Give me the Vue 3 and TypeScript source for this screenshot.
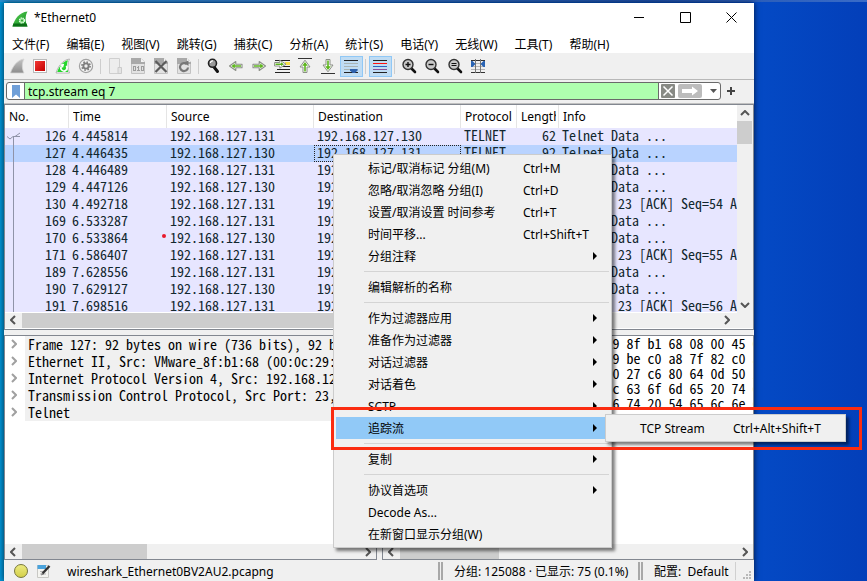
<script setup lang="ts">
import { ref } from 'vue'

interface Packet {
  no: number
  time: string
  src: string
  dst: string
  proto: string
  len: number
  info: string
}

interface MenuItem {
  label?: string
  keys?: string
  sub?: boolean
  active?: boolean
}

interface Tool {
  icon: string
  title: string
  on?: boolean
}

const filter = ref('tcp.stream eq 7')

const menus: string[] = [
  '文件(F)', '编辑(E)', '视图(V)', '跳转(G)', '捕获(C)', '分析(A)',
  '统计(S)', '电话(Y)', '无线(W)', '工具(T)', '帮助(H)',
]

const toolGroups: Tool[][] = [
  [
    { icon: 'fin-gray', title: 'Start' },
    { icon: 'stop', title: 'Stop' },
    { icon: 'restart', title: 'Restart' },
    { icon: 'options', title: 'Options' },
  ],
  [
    { icon: 'open', title: 'Open' },
    { icon: 'save', title: 'Save' },
    { icon: 'close-file', title: 'Close file' },
    { icon: 'reload', title: 'Reload' },
  ],
  [
    { icon: 'find', title: 'Find' },
    { icon: 'back', title: 'Back' },
    { icon: 'forward', title: 'Forward' },
    { icon: 'goto', title: 'Go to packet' },
    { icon: 'first', title: 'First packet' },
    { icon: 'last', title: 'Last packet' },
    { icon: 'autoscroll', title: 'Auto scroll', on: true },
  ],
  [{ icon: 'colorize', title: 'Colorize', on: true }],
  [
    { icon: 'zoom-in', title: 'Zoom in' },
    { icon: 'zoom-out', title: 'Zoom out' },
    { icon: 'zoom-reset', title: 'Normal size' },
    { icon: 'columns', title: 'Resize columns' },
  ],
]

const columns: string[] = ['No.', 'Time', 'Source', 'Destination', 'Protocol', 'Length', 'Info']

const A = '192.168.127.131'
const B = '192.168.127.130'
const data = 'Telnet Data ...'

const telnet = (no: number, time: string, src: string, len: number): Packet => ({
  no, time, src, dst: src === A ? B : A, proto: 'TELNET', len, info: data,
})
const ack = (no: number, time: string, seq: number): Packet => ({
  no, time, src: A, dst: B, proto: 'TCP', len: 54,
  info: `50820 > 23 [ACK] Seq=${seq} Ack=96`,
})

const packets: Packet[] = [
  telnet(126, '4.445814', A, 62),
  telnet(127, '4.446435', B, 92),
  telnet(128, '4.446489', A, 57),
  telnet(129, '4.447126', B, 60),
  ack(130, '4.492718', 54),
  telnet(169, '6.533287', A, 55),
  telnet(170, '6.533864', B, 60),
  ack(171, '6.586407', 55),
  telnet(189, '7.628556', A, 55),
  telnet(190, '7.629127', B, 60),
  ack(191, '7.698516', 56),
]
const selected = ref(127)

const details: string[] = [
  'Frame 127: 92 bytes on wire (736 bits), 92 bytes captured',
  'Ethernet II, Src: VMware_8f:b1:68 (00:0c:29:8f:b1:68)',
  'Internet Protocol Version 4, Src: 192.168.127.130',
  'Transmission Control Protocol, Src Port: 23, Dst Port: 50820',
  'Telnet',
]

const hex: string = [
  '0000  00 0c 29 3e 5d 1a 00 0c  29 8f b1 68 08 00 45 00',
  '0010  00 4e 5a 3c 40 00 40 06  09 be c0 a8 7f 82 c0 a8',
  '0020  7f 83 00 17 c6 84 3b a0  00 27 c6 80 64 0d 50 18',
  '0030  00 e5 7a 1c 00 00 57 65  6c 63 6f 6d 65 20 74 6f',
  '0040  20 4d 69 63 72 6f 73 6f  66 74 20 54 65 6c 6e 65',
].join('\n')

const contextMenu: MenuItem[] = [
  { label: '标记/取消标记 分组(M)', keys: 'Ctrl+M' },
  { label: '忽略/取消忽略 分组(I)', keys: 'Ctrl+D' },
  { label: '设置/取消设置 时间参考', keys: 'Ctrl+T' },
  { label: '时间平移...', keys: 'Ctrl+Shift+T' },
  { label: '分组注释', sub: true },
  {},
  { label: '编辑解析的名称' },
  {},
  { label: '作为过滤器应用', sub: true },
  { label: '准备作为过滤器', sub: true },
  { label: '对话过滤器', sub: true },
  { label: '对话着色', sub: true },
  { label: 'SCTP', sub: true },
  { label: '追踪流', sub: true, active: true },
  {},
  { label: '复制', sub: true },
  {},
  { label: '协议首选项', sub: true },
  { label: 'Decode As...' },
  { label: '在新窗口显示分组(W)' },
]
</script>

<template>
  <div class="desktop">
    <svg class="sprite" aria-hidden="true">
      <defs>
        <linearGradient id="g-fin" x1="0" y1="0" x2="1" y2="1">
          <stop offset="0" stop-color="#5fd35a" />
          <stop offset="1" stop-color="#0b8a1a" />
        </linearGradient>
        <linearGradient id="g-gray" x1="0" y1="0" x2="0" y2="1">
          <stop offset="0" stop-color="#c4c4c4" />
          <stop offset="1" stop-color="#8c8c8c" />
        </linearGradient>
        <linearGradient id="g-red" x1="0" y1="0" x2="1" y2="1">
          <stop offset="0" stop-color="#f23a36" />
          <stop offset="1" stop-color="#c40000" />
        </linearGradient>
        <symbol id="fin" viewBox="0 0 16 16">
          <path d="M.5 15.5C2.500 8 7 1.500 15.500.5C13 5 13 10.500 15.500 15.500Z" fill="url(#g-fin)" />
          <path d="M.5 15.500L1.500 12.500H14.500L15.500 15.500Z" fill="#0c6f17" />
          <circle cx="10" cy="9.500" r="2.600" fill="#9be79a" stroke="#e7ffe7" stroke-width="1.200" stroke-dasharray="1.300 .8" />
          <circle cx="10" cy="9.500" r="1" fill="#2c9e33" />
        </symbol>
        <symbol id="fin-gray" viewBox="0 0 16 16">
          <path d="M1.500 15C3.500 8.500 8 2 15 1C12.800 5 12.800 10.500 15 15Z" fill="url(#g-gray)" stroke="#d6d6d6" stroke-width=".8" />
        </symbol>
        <symbol id="stop" viewBox="0 0 16 16">
          <rect x="1.500" y="1.500" width="13" height="13" fill="#fff" stroke="#b9b9b9" />
          <rect x="3" y="3" width="10" height="10" fill="url(#g-red)" />
        </symbol>
        <symbol id="restart" viewBox="0 0 16 16">
          <path d="M1 15C3 8.500 7.500 2 14.500 1C12.500 5 12.500 10.500 14.500 15Z" fill="#fff" stroke="#a4a4a4" stroke-width=".8" />
          <path d="M2.200 14C4 8.500 8 3.500 13 2.300C11.500 6 11.500 10 13.200 14Z" fill="#24d62c" />
          <path d="M6.500 8.200A3 3 0 1 0 11.200 8" fill="none" stroke="#fff" stroke-width="1.600" />
          <path d="M5 6.500L9.200 5.800L8 10Z" fill="#fff" />
        </symbol>
        <symbol id="options" viewBox="0 0 16 16">
          <circle cx="8" cy="8" r="6.600" fill="#f4f4f4" stroke="#a2a2a2" stroke-width="1.200" />
          <circle cx="8" cy="8" r="3.600" fill="#7d7d7d" />
          <circle cx="8" cy="8" r="4.100" fill="none" stroke="#7d7d7d" stroke-width="1.600" stroke-dasharray="1.600 1.620" />
          <circle cx="8" cy="8" r="1.700" fill="#eee" />
        </symbol>
        <symbol id="open" viewBox="0 0 16 16">
          <path d="M2.500.5H12.500V15.500H2.500Z" fill="#ededed" stroke="#cfcfcf" />
          <path d="M11 9.500H14.500V15.500H11Z" fill="#e4e4e4" stroke="#cacaca" />
        </symbol>
        <symbol id="page" viewBox="0 0 16 16">
          <path d="M1.500.5H11L14.500 4V15.500H1.500Z" fill="#e2e2e2" stroke="#c2c2c2" />
          <path d="M1 0H11V4H15V6H1Z" fill="#a9a9a9" />
          <path d="M11 .5L14.500 4H11Z" fill="#f4f4f4" />
        </symbol>
        <symbol id="save" viewBox="0 0 16 16">
          <use href="#page" width="16" height="16" />
          <g fill="none" stroke="#9c9c9c">
            <rect x="3.500" y="8.500" width="2" height="4" />
            <path d="M8.500 8V13M7 9.500H8M7 12.500H10" />
            <rect x="11.500" y="8.500" width="2" height="4" />
          </g>
        </symbol>
        <symbol id="close-file" viewBox="0 0 16 16">
          <use href="#page" width="16" height="16" />
          <path d="M2.500 3L13.500 14M13.500 3L2.500 14" stroke="#5c5c5c" stroke-width="2.200" fill="none" />
        </symbol>
        <symbol id="reload" viewBox="0 0 16 16">
          <use href="#page" width="16" height="16" />
          <path d="M10.800 6.200A4 4 0 1 0 12 9.500" stroke="#777" stroke-width="2.200" fill="none" />
          <path d="M8 4.500L12.500 2.500V8Z" fill="#777" />
        </symbol>
        <symbol id="find" viewBox="0 0 16 16">
          <path d="M9 9L12.500 13.500" stroke="#111" stroke-width="3" stroke-linecap="round" />
          <circle cx="7.500" cy="5.300" r="4" fill="#9a9a9a" stroke="#222" stroke-width="1.600" />
          <path d="M5.300 5A2.400 2.400 0 0 1 8 3" stroke="#fff" stroke-width="1.200" fill="none" />
        </symbol>
        <symbol id="forward" viewBox="0 0 16 16">
          <path d="M2 6.200H8.200V3.500L14.500 8L8.200 12.500V9.800H2Z" fill="#fff" stroke="#8b8f86" stroke-width="1.100" stroke-linejoin="round" />
          <path d="M3 7.200H9.200V5.600L12.600 8L9.200 10.400V8.800H3Z" fill="#5cb51c" />
        </symbol>
        <symbol id="back" viewBox="0 0 16 16">
          <path d="M14 6.200H7.800V3.500L1.500 8L7.800 12.500V9.800H14Z" fill="#fff" stroke="#8b8f86" stroke-width="1.100" stroke-linejoin="round" />
          <path d="M13 7.200H6.800V5.600L3.400 8L6.800 10.400V8.800H13Z" fill="#5cb51c" />
        </symbol>
        <symbol id="goto" viewBox="0 0 16 16">
          <path d="M1 2.500H16M3 11.500H16M1 14.500H16M9 8.500H16" stroke="#222" />
          <rect x="11" y="4" width="5" height="3" fill="#f7e04a" />
          <path d="M.6 4.500H5.800V2.200L12 6.200L5.800 10.200V8H.6Z" fill="#fff" stroke="#8b8f86" />
          <path d="M1.500 5.600H7V4.300L10 6.200L7 8.100V6.900H1.500Z" fill="#5cb51c" />
        </symbol>
        <symbol id="first" viewBox="0 0 16 16">
          <path d="M1 .5H15" stroke="#333" />
          <path d="M6 14.500V9H3L8 2.200L13 9H10V14.500Z" fill="#fff" stroke="#8b8f86" stroke-linejoin="round" />
          <path d="M7.200 13.500V7.800H5.200L8 4L10.800 7.800H8.800V13.500Z" fill="#5cb51c" />
        </symbol>
        <symbol id="last" viewBox="0 0 16 16">
          <path d="M1 15.500H15" stroke="#333" />
          <path d="M6 1.500V7H3L8 13.800L13 7H10V1.500Z" fill="#fff" stroke="#8b8f86" stroke-linejoin="round" />
          <path d="M7.200 2.500V8.200H5.200L8 12L10.800 8.200H8.800V2.500Z" fill="#5cb51c" />
        </symbol>
        <symbol id="autoscroll" viewBox="0 0 16 16">
          <path d="M1 2.500H15M1 14.500H15" stroke="#222" />
          <path d="M1 5.500H15M1 8.500H15M1 11.500H15" stroke="#a9b4b4" />
          <path d="M7 11H14.500V12.500L12 15H9.500L7 12.500Z" fill="#2e62ad" />
        </symbol>
        <symbol id="colorize" viewBox="0 0 16 16">
          <rect x="1" y="2" width="14" height="1" fill="#222" />
          <rect x="1" y="5" width="14" height="1" fill="#ff1010" />
          <rect x="1" y="8" width="14" height="1" fill="#2c62c0" />
          <rect x="1" y="11" width="14" height="1" fill="#8a4e9a" />
          <rect x="1" y="14" width="14" height="1" fill="#222" />
        </symbol>
        <symbol id="lens" viewBox="0 0 16 16">
          <path d="M10.500 10.500L14 14" stroke="#111" stroke-width="2.600" stroke-linecap="round" />
          <circle cx="7" cy="6.500" r="5" fill="#c9c9c9" stroke="#333" stroke-width="1.400" />
        </symbol>
        <symbol id="zoom-in" viewBox="0 0 16 16">
          <use href="#lens" width="16" height="16" />
          <path d="M4.500 6.500H9.500M7 4V9" stroke="#111" stroke-width="1.400" />
        </symbol>
        <symbol id="zoom-out" viewBox="0 0 16 16">
          <use href="#lens" width="16" height="16" />
          <path d="M4.500 6.500H9.500" stroke="#111" stroke-width="1.400" />
        </symbol>
        <symbol id="zoom-reset" viewBox="0 0 16 16">
          <use href="#lens" width="16" height="16" />
          <path d="M4.500 5.500H9.500M4.500 7.500H9.500" stroke="#111" />
        </symbol>
        <symbol id="columns" viewBox="0 0 16 16">
          <path d="M1 2.500H15M1 14.500H15" stroke="#333" />
          <path d="M1 5.500H15M1 8.500H15M1 11.500H15" stroke="#b5b5b5" />
          <path d="M5.500 1V15M10.500 1V15" stroke="#777" />
          <path d="M1 3H2.500L5.500 6L2.500 9H1ZM15 3H13.500L10.500 6L13.500 9H15Z" fill="#2a64b4" />
        </symbol>
      </defs>
    </svg>

    <main class="window">
      <header class="title-bar">
        <svg class="icon"><use href="#fin" /></svg>
        <h1>*Ethernet0</h1>
        <button aria-label="Minimize"><svg class="ctl" viewBox="0 0 11 11"><path d="M0 5.500H10" /></svg></button>
        <button aria-label="Maximize"><svg class="ctl" viewBox="0 0 11 11"><path d="M.5.5H10.500V10.500H.5Z" /></svg></button>
        <button aria-label="Close"><svg class="ctl" viewBox="0 0 11 11"><path d="M.5.5L10.500 10.500M10.500.5L.5 10.500" /></svg></button>
      </header>

      <nav class="menu-bar">
        <button v-for="m in menus" :key="m">{{ m }}</button>
      </nav>

      <div class="tool-bar">
        <div v-for="(group, i) in toolGroups" :key="i" class="tool-group">
          <button v-for="t in group" :key="t.icon" :class="{ on: t.on }" :aria-label="t.title">
            <svg class="icon"><use :href="'#' + t.icon" /></svg>
          </button>
        </div>
      </div>

      <div class="filter-bar">
        <div class="filter-field">
          <button class="mark" aria-label="Bookmarks">
            <svg viewBox="0 0 8 13"><path d="M0 0H8V13L4 9.500L0 13Z" fill="#6f9fd8" /></svg>
          </button>
          <input v-model="filter" aria-label="Display filter" spellcheck="false" />
          <button class="clear" aria-label="Clear">
            <svg viewBox="0 0 14 14"><path d="M2.500 2.500L11.500 11.500M11.500 2.500L2.500 11.500" stroke="#fff" stroke-width="1.500" /></svg>
          </button>
          <button class="apply" aria-label="Apply">
            <svg viewBox="0 0 24 14"><path d="M4 5H14V2.500L20 7L14 11.500V9H4Z" fill="#fff" /></svg>
          </button>
          <button class="drop" aria-label="Recent filters">
            <svg viewBox="0 0 7 4"><path d="M0 0H7L3.500 4Z" fill="#555" /></svg>
          </button>
        </div>
        <button class="add" aria-label="Add filter button">
          <svg viewBox="0 0 8 8"><path d="M4 0V8M0 4H8" stroke="#444" stroke-width="2" /></svg>
        </button>
      </div>

      <div class="panes">
        <section class="pane list">
          <div class="list-body">
            <table>
              <colgroup>
                <col class="c-no" /><col class="c-time" /><col class="c-addr" /><col class="c-addr" />
                <col class="c-proto" /><col class="c-len" /><col />
              </colgroup>
              <thead>
                <tr>
                  <th v-for="c in columns" :key="c"><div>{{ c }}</div></th>
                </tr>
              </thead>
              <tbody>
                <tr v-for="p in packets" :key="p.no" :class="{ sel: p.no === selected }" @click="selected = p.no">
                  <td class="num">{{ p.no }}</td>
                  <td>{{ p.time }}</td>
                  <td>{{ p.src }}</td>
                  <td class="dst">{{ p.dst }}</td>
                  <td>{{ p.proto }}</td>
                  <td class="num">{{ p.len }}</td>
                  <td>{{ p.info }}</td>
                </tr>
              </tbody>
            </table>
            <svg class="flow" viewBox="0 0 16 185" preserveAspectRatio="xMinYMin slice">
              <path d="M2 8.500L5 11L8 8.500H15M8.500 8V185M10 8.500L15 5" fill="none" stroke="#8f93a8" />
            </svg>
          </div>
          <div class="vbar">
            <button aria-label="Up"><svg class="chev up"><path d="M1 2L5 6L1 10" /></svg></button>
            <div class="thumb"></div>
            <button class="end" aria-label="Down"><svg class="chev down"><path d="M1 2L5 6L1 10" /></svg></button>
          </div>
          <div class="hbar">
            <button aria-label="Left"><svg class="chev left"><path d="M1 2L5 6L1 10" /></svg></button>
            <div class="thumb wide"></div>
            <button class="end" aria-label="Right"><svg class="chev"><path d="M1 2L5 6L1 10" /></svg></button>
          </div>
        </section>

        <div class="lower">
          <section class="pane tree">
            <ul>
              <li v-for="d in details" :key="d">
                <svg class="chev light"><path d="M1 2L5 6L1 10" /></svg>
                <span>{{ d }}</span>
              </li>
            </ul>
            <div class="hbar">
              <button aria-label="Left"><svg class="chev left"><path d="M1 2L5 6L1 10" /></svg></button>
              <div class="thumb"></div>
              <button class="end" aria-label="Right"><svg class="chev"><path d="M1 2L5 6L1 10" /></svg></button>
            </div>
          </section>
          <section class="pane bytes">
            <pre>{{ hex }}</pre>
            <div class="hbar">
              <button aria-label="Left"><svg class="chev left"><path d="M1 2L5 6L1 10" /></svg></button>
              <div class="thumb short"></div>
              <button class="end" aria-label="Right"><svg class="chev"><path d="M1 2L5 6L1 10" /></svg></button>
            </div>
          </section>
        </div>
      </div>

      <footer class="status">
        <button class="led" aria-label="Expert info"></button>
        <button class="note" aria-label="Capture comment">
          <svg viewBox="0 0 14 14">
            <path d="M.5 1.500H11.500V13.500H.5Z" fill="#f4f4f0" stroke="#c8c8c4" />
            <path d="M.5 1H9V5H.5Z" fill="#4aa3dc" />
            <path d="M3 7.500H7M3 10H9" stroke="#b5b5b5" />
            <path d="M5.500 9.500L12.500 2" stroke="#333" stroke-width="2.400" />
            <path d="M4 11.500L5 8.500L7 10.300Z" fill="#777" />
          </svg>
        </button>
        <span class="file">wireshark_Ethernet0BV2AU2.pcapng</span>
        <span class="cell count">分组: 125088 · 已显示: 75 (0.1%)</span>
        <span class="cell profile">配置:&nbsp; Default</span>
        <svg class="grip" viewBox="0 0 9 9">
          <path d="M6 0H8V2H6ZM3 3H5V5H3ZM6 3H8V5H6ZM0 6H2V8H0ZM3 6H5V8H3ZM6 6H8V8H6Z" fill="#b8b8b8" />
        </svg>
      </footer>
    </main>

    <div class="menu context" role="menu">
      <template v-for="(m, i) in contextMenu" :key="i">
        <button v-if="m.label" role="menuitem" :class="{ active: m.active }">
          <span class="label">{{ m.label }}</span>
          <span class="keys">{{ m.keys }}</span>
          <svg v-if="m.sub" class="arrow" viewBox="0 0 4 8"><path d="M0 0L4 4L0 8Z" /></svg>
        </button>
        <hr v-else />
      </template>
    </div>
    <div class="menu submenu" role="menu">
      <button role="menuitem">
        <span class="label">TCP Stream</span>
        <span class="keys">Ctrl+Alt+Shift+T</span>
      </button>
    </div>
    <div class="callout"></div>
    <div class="dot"></div>
  </div>
</template>

<style>
body {
  background: #0341bb;
  overflow: hidden;
}
</style>

<style scoped>
.desktop {
  position: relative;
  display: flex;
  box-sizing: border-box;
  height: 100vh;
  padding: 3px 113px 0 4px;
  background:
    linear-gradient(90deg, #2a8fd0, #2f6fc4 40%, #1c50ac 75%, #3a6cc8) top / 100% 2px no-repeat,
    linear-gradient(90deg, #0095d8 4px, #0a6ac8 20%, #0449c4 88%, #033fb9);
  font: 12px/16px "Noto Sans", "Noto Sans CJK SC", sans-serif;
  color: #000;
}
.sprite { position: absolute; width: 0; height: 0; }
button {
  padding: 0;
  border: 0;
  background: none;
  font: inherit;
  color: inherit;
}
.icon { display: block; width: 16px; height: 16px; }

.window {
  display: flex;
  flex: 1;
  flex-direction: column;
  min-width: 0;
  background: #f0f0f0;
  box-shadow: 0 0 6px rgba(0, 0, 0, .7);
}

.title-bar { display: flex; align-items: center; height: 31px; padding-left: 8px; background: #fff; }
.title-bar h1 { flex: 1; margin: 0 0 2px 6px; font-size: 12px; font-weight: 400; }
.title-bar button { width: 46px; height: 29px; }
.ctl { width: 11px; height: 11px; fill: none; stroke: #000; }

.menu-bar {
  display: flex;
  box-sizing: border-box;
  gap: 1px;
  height: 20px;
  border-bottom: 1px solid #f0f0f0;
  background: #fff;
}
.menu-bar button { padding: 2px 8px 0; white-space: nowrap; }

.tool-bar {
  display: flex;
  box-sizing: border-box;
  height: 26px;
  padding: 2px;
  border-bottom: 1px solid #b8b8b8;
}
.tool-group { display: flex; }
.tool-group + .tool-group::before {
  content: "";
  width: 1px;
  height: 15px;
  margin: 3px 3px 0 2px;
  background: #cdcdcd;
}
.tool-group button {
  box-sizing: border-box;
  width: 23px;
  height: 21px;
  padding: 2px 4px 3px 3px;
}
.tool-group .on { background: #c0dcf3; box-shadow: inset 0 0 0 1px #90c8f6; }

.filter-bar { display: flex; box-sizing: border-box; height: 24px; padding: 2px 19px 3px 2px; border-bottom: 1px solid #c0c0c0; }
.filter-field {
  display: flex;
  flex: 1;
  align-items: center;
  min-width: 0;
  border: 1px solid #6a6a6a;
  border-radius: 3px;
  background: #fff;
}
.filter-field button { display: grid; flex: none; place-items: center; }
.mark { width: 17px; }
.mark svg { width: 8px; height: 13px; }
.filter-field input {
  flex: 1;
  align-self: stretch;
  min-width: 0;
  padding: 2px 3px 0;
  border: solid #6a6a6a;
  border-width: 0 1px;
  outline: 0;
  background: #afffaf;
  font: inherit;
}
.clear { width: 14px; height: 14px; margin-left: 2px; border-radius: 1px; background: #888a85; }
.clear svg { width: 14px; height: 14px; }
.apply { width: 24px; height: 14px; margin-left: 3px; border-radius: 2px; background: #bcbcbc; }
.apply svg { width: 24px; height: 14px; }
.drop { width: 18px; padding-left: 4px; }
.drop svg { width: 7px; height: 4px; }
.add { display: grid; place-items: center; width: 8px; margin-left: 6px; }
.add svg { width: 8px; height: 8px; }

.panes { display: grid; flex: 1; grid-template-rows: 1fr 1fr; gap: 5px; min-height: 0; }
.pane { box-sizing: border-box; min-width: 0; min-height: 0; border: 1px solid #828790; background: #fff; }
.list { display: grid; grid-template: minmax(0, 1fr) 16px / minmax(0, 1fr) 16px; }
.list-body { position: relative; overflow: hidden; border-bottom: 1px solid #fff; }

table { width: 100%; border-collapse: collapse; table-layout: fixed; }
.c-no { width: 64px; }
.c-time { width: 98px; }
.c-addr { width: 147px; }
.c-proto { width: 56px; }
.c-len { width: 42px; }
th {
  height: 23px;
  padding: 0 3px 0 4px;
  box-shadow: inset -1px 0 #e5e5e5;
  font-weight: 400;
  text-align: left;
  white-space: nowrap;
}
th div { overflow: hidden; }
th:last-child { box-shadow: none; }
td {
  overflow: hidden;
  height: 17px;
  padding: 0 0 0 3px;
  background: #e7e6ff;
  color: #12272e;
  font: 14px/15px "Noto Sans Mono CJK SC", "DejaVu Sans Mono", monospace;
  vertical-align: top;
  white-space: nowrap;
}
td.num { padding: 0 3px 0 0; text-align: right; }
.sel td { background: #b9d3ff; }
.sel .dst { outline: 1px dotted #222; outline-offset: -1px; }
.flow { position: absolute; top: 23px; left: 0; width: 16px; height: 185px; }

.vbar { display: flex; flex-direction: column; background: #f0f0f0; }
.vbar button, .hbar button { display: grid; flex: none; place-items: center; width: 16px; height: 16px; }
.vbar .thumb { height: 23px; margin-right: 1px; background: #cdcdcd; }
.hbar { display: flex; grid-column: 1; height: 15px; background: #f0f0f0; }
.list .hbar { grid-column: 1 / -1; padding-right: 18px; }
.hbar button { height: 15px; }
.hbar .thumb { width: 125px; margin: 0 0 0 1px; background: #cdcdcd; }
.hbar .thumb.wide { width: 64%; }
.hbar .thumb.short { width: 99px; }
.end { margin: auto 0 0 auto; }
.chev { flex: none; width: 6px; height: 12px; fill: none; stroke: #555; stroke-width: 2; }
.chev.left { transform: rotate(180deg); }
.chev.up { transform: rotate(-90deg); }
.chev.down { transform: rotate(90deg); }
.chev.light { stroke: #a0a0a0; }

.lower { display: grid; grid-template-columns: 1fr 1fr; gap: 5px; min-height: 0; }
.tree, .bytes { display: flex; flex-direction: column; overflow: hidden; }
.tree ul { flex: 1; margin: 0; padding: 0; overflow: hidden; list-style: none; }
.tree li { display: flex; align-items: center; height: 17px; padding-left: 6px; }
.tree li span {
  flex: 1;
  height: 17px;
  margin-left: 8px;
  padding-left: 3px;
  background: #f0f0f0;
  font: 14px/17px "Noto Sans Mono CJK SC", "DejaVu Sans Mono", monospace;
  white-space: pre;
}
.bytes pre {
  flex: 1;
  margin: 0;
  padding: 0 6px;
  overflow: hidden;
  font: 14px/15px "Noto Sans Mono CJK SC", "DejaVu Sans Mono", monospace;
}

.status { display: flex; align-items: center; height: 21px; padding-left: 10px; white-space: nowrap; }
.led {
  box-sizing: border-box;
  width: 14px;
  height: 14px;
  border: 1px solid #77773a;
  border-radius: 50%;
  background: linear-gradient(#ecea80, #d4d04a);
}
.note { width: 14px; height: 14px; margin-left: 9px; }
.note svg { display: block; width: 14px; height: 14px; }
.file { flex: 1; margin-left: 16px; padding-top: 2px; }
.cell { box-sizing: border-box; padding: 2px 0 0 11px; border-left: 5px double #a8a8a8; }
.count { width: 200px; }
.profile { width: 98px; border-right: 1px solid #d0d0d0; }
.grip { width: 9px; height: 9px; margin: 10px 2px 0 7px; }

.menu {
  position: absolute;
  box-sizing: border-box;
  padding: 2px;
  border: 1px solid #ccc;
  background: #f0f0f0;
  box-shadow: 3px 3px 3px rgba(0, 0, 0, .5);
}
.menu button {
  display: flex;
  align-items: center;
  width: 100%;
  height: 22px;
  padding: 0 12px 0 32px;
  text-align: left;
  white-space: nowrap;
}
.menu .label { width: 155px; padding-top: 2px; }
.menu .keys { flex: 1; padding-top: 2px; }
.menu .active { background: #91c9f7; }
.menu hr { height: 1px; margin: 4px 0 4px 28px; border: 0; background: #d4d4d4; }
.arrow { width: 4px; height: 8px; }
.context { top: 154px; left: 333px; width: 279px; }
.submenu { top: 414px; left: 605px; width: 241px; }
.submenu .label { width: 93px; }
.callout { position: absolute; top: 407px; left: 331px; width: 525px; height: 37px; border: 3px solid #fb2c10; pointer-events: none; }
.dot { position: absolute; top: 234px; left: 162px; width: 4px; height: 4px; border-radius: 50%; background: #e8192c; }
</style>
